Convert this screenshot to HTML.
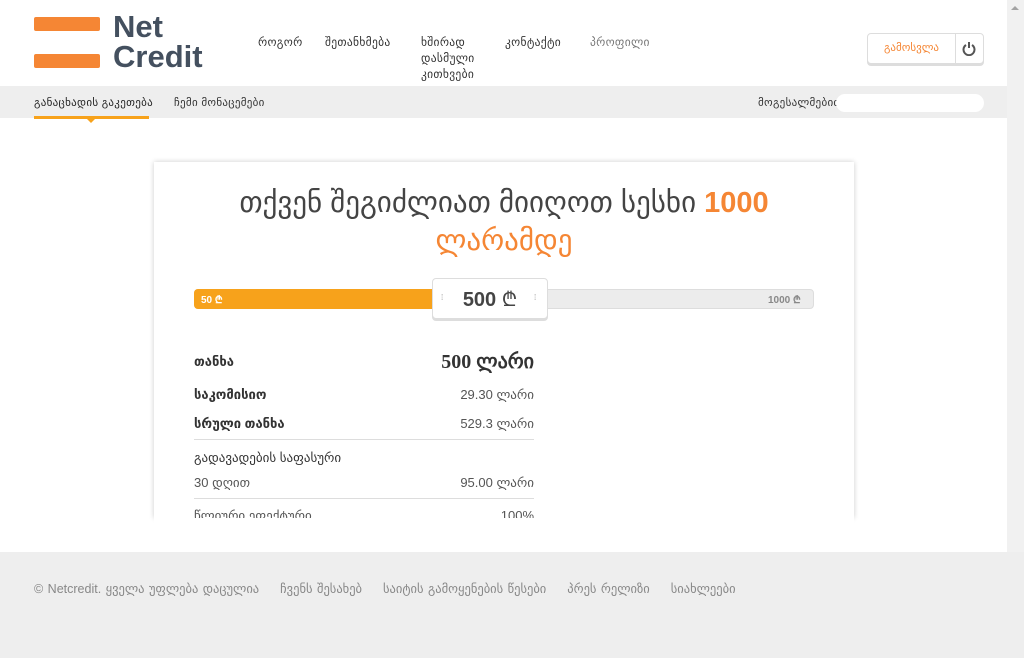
<!DOCTYPE html>
<html><head><meta charset="utf-8"><style>
*{margin:0;padding:0;box-sizing:border-box}
body{width:1024px;height:658px;overflow:hidden;background:#fff;font-family:"Liberation Sans","DejaVu Sans",sans-serif;position:relative;color:#333}
.a{position:absolute}
.bar{background:#f58634;border-radius:2px}
.nav{font-size:11.5px;color:#333;letter-spacing:.3px;line-height:16px}
</style></head><body>
<div class="a bar" style="left:34px;top:17px;width:66px;height:14px"></div>
<div class="a bar" style="left:34px;top:54px;width:66px;height:14px"></div>
<div class="a" style="left:113px;top:12px;font-size:31px;line-height:30px;color:#44505f;font-weight:bold">Net<br>Credit</div>
<div class="a nav" style="left:258px;top:35px">როგორ</div>
<div class="a nav" style="left:325px;top:35px">შეთანხმება</div>
<div class="a nav" style="left:421px;top:35px">ხშირად<br>დასმული<br>კითხვები</div>
<div class="a nav" style="left:505px;top:35px">კონტაქტი</div>
<div class="a nav" style="left:590px;top:35px;color:#777">პროფილი</div>
<div class="a" style="left:867px;top:33px;width:117px;height:31px;border:1px solid #ddd;border-radius:4px;box-shadow:0 2px 0 #ddd;background:#fff"></div>
<div class="a" style="left:868px;top:34px;width:87px;height:29px;font-size:11px;color:#f58634;text-align:center;line-height:29px">გამოსვლა</div>
<div class="a" style="left:955px;top:34px;width:1px;height:29px;background:#ddd"></div>
<svg class="a" style="left:962px;top:41px" width="14" height="15" viewBox="0 0 14 15"><path d="M4 4A5.5 5.5 0 1 0 10 4" fill="none" stroke="#555" stroke-width="2"/><path d="M7 1V7" stroke="#555" stroke-width="2"/></svg>
<div class="a" style="left:1007px;top:0;width:17px;height:552px;background:#f1f1f1"></div>
<div class="a" style="left:1011px;top:6px;width:0;height:0;border:4px solid transparent;border-bottom:4px solid #a3a3a3;border-top:0"></div>
<div class="a" style="left:0;top:86px;width:1007px;height:32px;background:#eee"></div>
<div class="a nav" style="left:34px;top:95px;font-size:11px;color:#222">განაცხადის გაკეთება</div>
<div class="a" style="left:34px;top:116px;width:115px;height:3px;background:#f7a21b"></div>
<div class="a" style="left:87px;top:119px;border:4px solid transparent;border-top:4px solid #f7a21b;border-bottom:0"></div>
<div class="a nav" style="left:174px;top:95px;font-size:11px">ჩემი მონაცემები</div>
<div class="a nav" style="left:758px;top:95px;font-size:11px">მოგესალმებით</div>
<div class="a" style="left:836px;top:94px;width:148px;height:18px;background:#fff;border-radius:9px"></div>
<div class="a" style="left:154px;top:162px;width:700px;height:356px;background:#fff;box-shadow:0 0 5px rgba(0,0,0,.2)"></div>
<div class="a" style="left:154px;top:184px;width:700px;text-align:center;font-size:29px;line-height:38px;color:#444">თქვენ შეგიძლიათ მიიღოთ სესხი <b style="color:#f58634">1000</b><br><span style="color:#f58634">ლარამდე</span></div>
<div class="a" style="left:194px;top:289px;width:620px;height:20px;background:#ececec;border:1px solid #ddd;border-radius:4px"></div>
<div class="a" style="left:194px;top:289px;width:250px;height:20px;background:#f7a21b;border-radius:4px 0 0 4px"></div>
<div class="a" style="left:201px;top:292px;font-size:10px;color:#fff;font-weight:bold">50 ₾</div>
<div class="a" style="left:768px;top:292px;font-size:10px;color:#888;font-weight:bold">1000 ₾</div>
<div class="a" style="left:432px;top:278px;width:116px;height:41px;background:#fff;border:1px solid #ddd;border-radius:4px;box-shadow:0 2px 0 #ddd"></div>
<div class="a" style="left:432px;top:285px;width:116px;text-align:center;font-size:20px;font-weight:bold;color:#444">500 <span style="font-weight:normal">₾</span></div>
<div class="a" style="left:441px;top:293px;font-size:8px;color:#999">⁞</div>
<div class="a" style="left:534px;top:293px;font-size:8px;color:#999">⁞</div>
<div class="a" style="left:194px;top:354px;font-size:13px;font-weight:bold;color:#333">თანხა</div>
<div class="a" style="left:380px;top:349px;width:154px;text-align:right;font-family:'Liberation Serif',serif;font-size:20px;font-weight:bold;color:#333">500 ლარი</div>
<div class="a" style="left:194px;top:387px;font-size:13px;font-weight:bold">საკომისიო</div>
<div class="a" style="left:380px;top:387px;width:154px;text-align:right;font-size:13px;color:#555">29.30 ლარი</div>
<div class="a" style="left:194px;top:416px;font-size:13px;font-weight:bold">სრული თანხა</div>
<div class="a" style="left:380px;top:416px;width:154px;text-align:right;font-size:13px;color:#555">529.3 ლარი</div>
<div class="a" style="left:194px;top:439px;width:340px;height:1px;background:#ddd"></div>
<div class="a" style="left:194px;top:450px;font-size:13px">გადავადების საფასური</div>
<div class="a" style="left:194px;top:475px;font-size:13px;color:#555">30 დღით</div>
<div class="a" style="left:380px;top:475px;width:154px;text-align:right;font-size:13px;color:#555">95.00 ლარი</div>
<div class="a" style="left:194px;top:498px;width:340px;height:1px;background:#ddd"></div>
<div class="a" style="left:154px;top:518px;width:700px;height:34px;background:#fff;overflow:hidden"></div>
<div class="a" style="left:194px;top:508px;width:340px;height:10px;overflow:hidden"><div style="font-size:13px;color:#555;display:flex;justify-content:space-between"><span>წლიური ეფექტური</span><span>100%</span></div></div>
<div class="a" style="left:0;top:552px;width:1024px;height:106px;background:#eee"></div>
<div class="a" style="left:34px;top:581px;font-size:12.5px;color:#888;word-spacing:1px;white-space:nowrap">© Netcredit. ყველა უფლება დაცულია<span style="margin-left:21px">ჩვენს შესახებ</span><span style="margin-left:21px">საიტის გამოყენების წესები</span><span style="margin-left:21px">პრეს რელიზი</span><span style="margin-left:21px">სიახლეები</span></div>
</body></html>
